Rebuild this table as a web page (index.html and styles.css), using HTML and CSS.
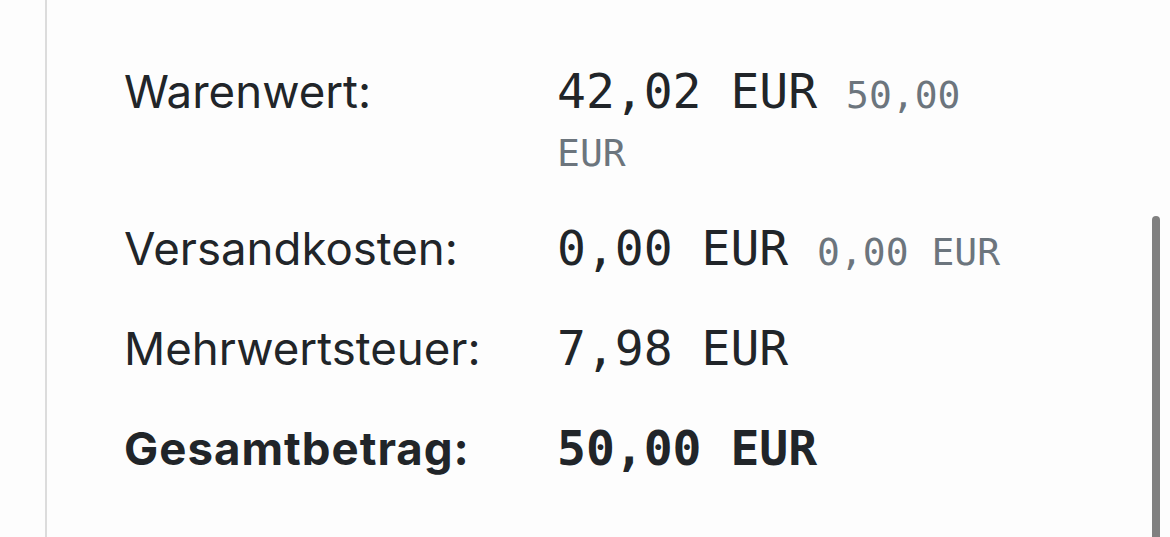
FILE: index.html
```html
<!DOCTYPE html>
<html lang="de">
<head>
<meta charset="utf-8">
<link rel="stylesheet" href="styles.css">
</head>
<body>
<div class="panel">
  <dl class="totals">
    <dt class="label">Warenwert:</dt>
    <dd class="value"><span class="main">42,02 EUR</span> <span class="old">50,00 EUR</span></dd>
    <dt class="label">Versandkosten:</dt>
    <dd class="value"><span class="main">0,00 EUR</span> <span class="old">0,00 EUR</span></dd>
    <dt class="label">Mehrwertsteuer:</dt>
    <dd class="value"><span class="main">7,98 EUR</span></dd>
    <dt class="label total">Gesamtbetrag:</dt>
    <dd class="value total"><span class="main">50,00 EUR</span></dd>
  </dl>
</div>
<div class="scrollbar"></div>
</body>
</html>
```

FILE: styles.css
```css
html, body {
  margin: 0;
  padding: 0;
  height: 100%;
  overflow: hidden;
  background: #fdfdfd;
}

body {
  font-family: Inter, "Noto Sans", sans-serif;
  color: #212529;
}

.panel {
  margin-left: 45px;
  width: 1076px;
  min-height: 100%;
  border-left: 2px solid #dcdcdc;
  border-right: 2px solid #dcdcdc;
  padding: 62px 77px 0;
  box-sizing: content-box;
}

.totals {
  margin: 0;
  display: grid;
  grid-template-columns: 433px 1fr;
  row-gap: 41px;
  align-items: baseline;
  width: 922px;
}

.label {
  font-size: 45.6px;
  line-height: 58px;
  font-weight: 400;
}

.label.total {
  font-weight: 700;
  letter-spacing: 1px;
}

.value {
  margin: 0;
  font-family: "DejaVu Sans Mono", monospace;
  font-size: 48px;
  line-height: 58px;
}

.old {
  font-size: 38px;
  line-height: 1;
  color: #6c757d;
}

.total {
  font-weight: 700;
}

.scrollbar {
  position: absolute;
  left: 1152px;
  top: 216px;
  width: 8px;
  height: 340px;
  border-radius: 4px;
  background: #808080;
}
```
